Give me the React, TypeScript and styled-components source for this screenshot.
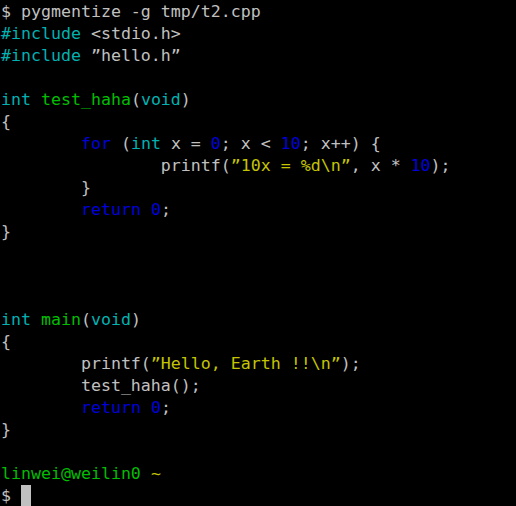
import { createGlobalStyle, styled } from 'styled-components';

const palette = {
  plain: '#c0c0c0',
  cyan: '#00b2b2',
  green: '#00be00',
  blue: '#0000dc',
  yellow: '#c4c400',
};

type Tone = keyof typeof palette;
type Segment = [string, Tone?];

const lines: Segment[][] = [
  [['$ pygmentize -g tmp/t2.cpp']],
  [['#include ', 'cyan'], ['<stdio.h>']],
  [['#include ', 'cyan'], ['”hello.h”']],
  [],
  [['int ', 'cyan'], ['test_haha', 'green'], ['('], ['void', 'cyan'], [')']],
  [['{']],
  [
    ['        '],
    ['for', 'blue'],
    [' ('],
    ['int', 'cyan'],
    [' x = '],
    ['0', 'blue'],
    ['; x < '],
    ['10', 'blue'],
    ['; x++) {'],
  ],
  [
    ['                printf('],
    ['”10x = %d\\n”', 'yellow'],
    [', x * '],
    ['10', 'blue'],
    [');'],
  ],
  [['        }']],
  [['        '], ['return', 'blue'], [' '], ['0', 'blue'], [';']],
  [['}']],
  [],
  [],
  [],
  [['int ', 'cyan'], ['main', 'green'], ['('], ['void', 'cyan'], [')']],
  [['{']],
  [['        printf('], ['”Hello, Earth !!\\n”', 'yellow'], [');']],
  [['        test_haha();']],
  [['        '], ['return', 'blue'], [' '], ['0', 'blue'], [';']],
  [['}']],
  [],
  [['linwei@weilin0', 'green'], [' '], ['~', 'yellow']],
];

const App = () => {
  return (
    <>
      <GlobalStyle />
      <Terminal>
        {lines.map((segments, i) => (
          <Line key={i}>
            {segments.map(([text, tone], j) => (
              <Token key={j} $tone={tone ?? 'plain'}>
                {text}
              </Token>
            ))}
          </Line>
        ))}
        <Line>
          <Token $tone='plain'>$ </Token>
          <Cursor />
        </Line>
      </Terminal>
    </>
  );
};

export default App;

const GlobalStyle = createGlobalStyle`
  html, body {
    margin: 0;
    padding: 0;
    background: #000;
  }
`;

const Terminal = styled.pre`
  margin: 0;
  width: 516px;
  height: 506px;
  padding: 1px 0 0 1px;
  box-sizing: border-box;
  overflow: hidden;

  background: #000;
  color: ${palette.plain};

  font-family: 'DejaVu Sans Mono', monospace;
  font-size: 16.6px;
  line-height: 22px;
`;

const Line = styled.div`
  height: 22px;
  white-space: pre;
  display: flex;
  align-items: stretch;
`;

const Token = styled.span<{ $tone: Tone }>`
  color: ${({ $tone }) => palette[$tone]};
`;

const Cursor = styled.span`
  display: inline-block;
  width: 10px;
  height: 22px;
  background: ${palette.plain};
`;
